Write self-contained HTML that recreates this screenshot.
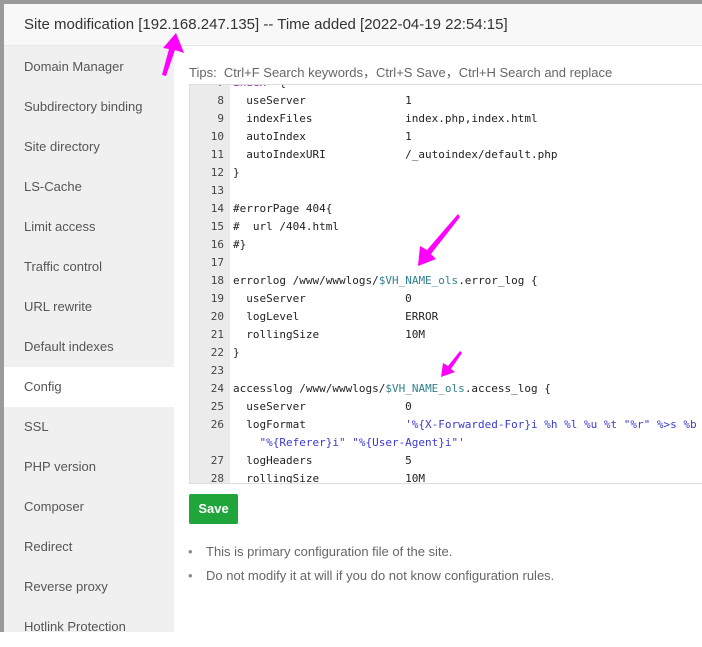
<!DOCTYPE html>
<html><head><meta charset="utf-8"><style>
*{margin:0;padding:0;box-sizing:border-box}
body{width:702px;height:632px;overflow:hidden;background:#fff;position:relative;font-family:"Liberation Sans",sans-serif}
.strip{position:absolute;left:0;top:0;width:4px;height:632px;background:#9a9a9a}
.top{position:absolute;left:0;top:0;width:702px;height:4px;background:#9a9a9a}
.hdr{position:absolute;left:4px;top:4px;width:698px;height:42px;background:#f8f8f8;border-bottom:1px solid #e8e8e8;font-size:15px;color:#333;line-height:42px;padding-left:20px}
.side{position:absolute;left:4px;top:46px;width:170px;height:586px;background:#f0f0f0;padding-top:1px}
.side div{height:40px;line-height:40px;padding-left:20px;font-size:13px;color:#555}
.side .act{background:#fff}
.tips{position:absolute;left:189px;top:62px;font-size:13px;color:#666}
.ed{position:absolute;left:189px;top:84px;width:513px;height:400px;border:1px solid #ddd;border-right:none;overflow:hidden;background:#fff}
.gut{position:absolute;left:0;top:0;width:40px;height:100%;background:#ebebeb}
.ln{position:absolute;left:0;width:34px;text-align:right;font:11px "DejaVu Sans Mono",monospace;color:#444;line-height:18px}
.cd{position:absolute;left:43px;font:11px "DejaVu Sans Mono",monospace;color:#222;line-height:18px;white-space:pre}
.v{color:#30818f}.s{color:#3a3ad0}.k{color:#8a2a9a}
.btn{position:absolute;left:189px;top:494px;width:49px;height:30px;background:#20a53a;border-radius:2px;color:#fff;font-size:13px;font-weight:bold;line-height:30px;text-align:center}
.li{position:absolute;left:189px;font-size:13px;color:#666}
.li:before{content:"•";position:absolute;left:-1px;color:#888}
.li span{margin-left:17px}
</style></head><body>
<div class="top"></div><div class="strip"></div>
<div class="hdr">Site modification [192.168.247.135] -- Time added [2022-04-19 22:54:15]</div>
<div class="side">
<div>Domain Manager</div><div>Subdirectory binding</div><div>Site directory</div><div>LS-Cache</div><div>Limit access</div><div>Traffic control</div><div>URL rewrite</div><div>Default indexes</div><div class="act">Config</div><div>SSL</div><div>PHP version</div><div>Composer</div><div>Redirect</div><div>Reverse proxy</div><div>Hotlink Protection</div>
</div>
<div class="tips">Tips:&nbsp; Ctrl+F Search keywords，Ctrl+S Save，Ctrl+H Search and replace</div>
<div class="ed">
<div class="gut"></div>
<div class="ln" style="top:-11px">7<br>8<br>9<br>10<br>11<br>12<br>13<br>14<br>15<br>16<br>17<br>18<br>19<br>20<br>21<br>22<br>23<br>24<br>25<br>26<br><br>27<br>28</div>
<div class="cd" style="top:-11px"><span class="k">index</span>  {
  useServer               1
  indexFiles              index.php,index.html
  autoIndex               1
  autoIndexURI            /_autoindex/default.php
}

#errorPage 404{
#  url /404.html
#}

errorlog /www/wwwlogs/<span class="v">$VH_NAME_ols</span>.error_log {
  useServer               0
  logLevel                ERROR
  rollingSize             10M
}

accesslog /www/wwwlogs/<span class="v">$VH_NAME_ols</span>.access_log {
  useServer               0
  logFormat               <span class="s">'%{X-Forwarded-For}i %h %l %u %t "%r" %&gt;s %b</span>
<span class="s">    "%{Referer}i" "%{User-Agent}i"'</span>
  logHeaders              5
  rollingSize             10M</div>
</div>
<div class="btn">Save</div>
<div class="li" style="top:544px"><span>This is primary configuration file of the site.</span></div>
<div class="li" style="top:568px"><span>Do not modify it at will if you do not know configuration rules.</span></div>
<svg style="position:absolute;left:0;top:0" width="702" height="632">
<g fill="#f0f">
<polygon points="176,33 184,53 175,50 166,76 162,75 169,49 163,48"/>
<polygon points="418,266 420,246 427,250 458,214 460,217 431,254 436,259"/>
<polygon points="441,377 443,363 448,366 460,351 462,353 451,369 455,372"/>
</g></svg>
</body></html>
